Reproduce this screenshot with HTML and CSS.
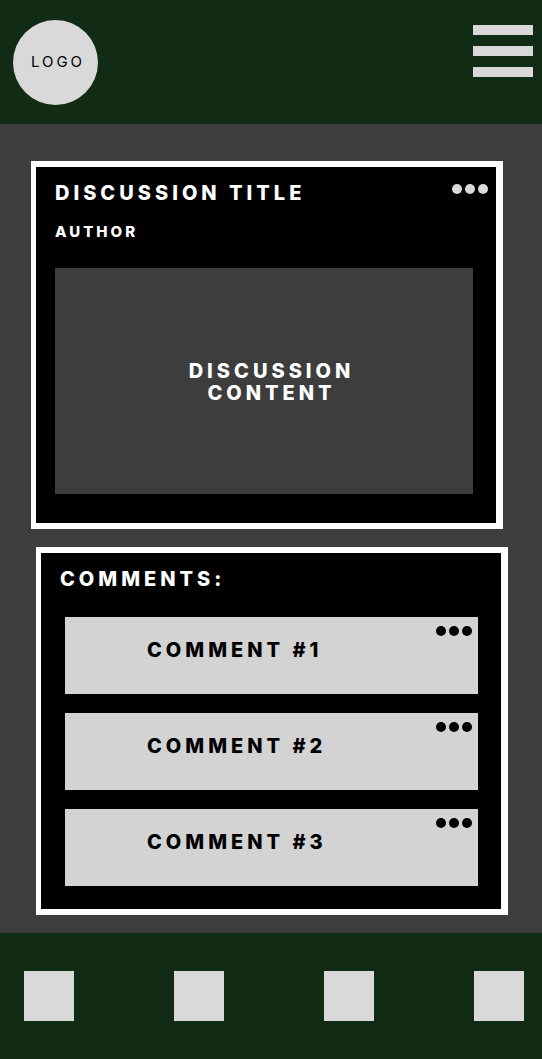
FILE: index.html
```html
<!DOCTYPE html>
<html lang="en">
<head>
<meta charset="utf-8">
<meta name="viewport" content="width=device-width, initial-scale=1">
<title>Discussion</title>
<link rel="stylesheet" href="styles.css">
</head>
<body>
<header class="topbar">
  <a class="logo" href="#">LOGO</a>
  <button class="menu" type="button" aria-label="Menu"><span class="bar"></span><span class="bar"></span><span class="bar"></span></button>
</header>
<main class="page">
  <article class="card discussion">
    <div class="card-head">
      <h1 class="heading">DISCUSSION TITLE</h1>
      <button class="more more-light" type="button" aria-label="Discussion options"><span class="dot"></span><span class="dot"></span><span class="dot"></span></button>
    </div>
    <p class="author">AUTHOR</p>
    <div class="content"><p class="content-text">DISCUSSION<br>CONTENT</p></div>
  </article>
  <section class="card comments">
    <h2 class="heading">COMMENTS:</h2>
    <ul class="comment-list">
      <li class="comment">
        <p class="comment-text">COMMENT #1</p>
        <button class="more" type="button" aria-label="Comment 1 options"><span class="dot"></span><span class="dot"></span><span class="dot"></span></button>
      </li>
      <li class="comment">
        <p class="comment-text">COMMENT #2</p>
        <button class="more" type="button" aria-label="Comment 2 options"><span class="dot"></span><span class="dot"></span><span class="dot"></span></button>
      </li>
      <li class="comment">
        <p class="comment-text">COMMENT #3</p>
        <button class="more" type="button" aria-label="Comment 3 options"><span class="dot"></span><span class="dot"></span><span class="dot"></span></button>
      </li>
    </ul>
  </section>
</main>
<nav class="tabs" aria-label="Main">
  <a class="tab" href="#" aria-label="Tab 1"></a>
  <a class="tab" href="#" aria-label="Tab 2"></a>
  <a class="tab" href="#" aria-label="Tab 3"></a>
  <a class="tab" href="#" aria-label="Tab 4"></a>
</nav>
</body>
</html>
```

FILE: styles.css
```css
* { box-sizing: border-box; }

body {
  margin: 0;
  min-height: 100vh;
  display: flex;
  flex-direction: column;
  background: #3d3d3d;
  color: #fff;
  font-family: Inter, "Liberation Sans", sans-serif;
  font-size: 20px;
  font-weight: 800;
  line-height: 24px;
  letter-spacing: 4px;
}

h1, h2, p, ul { margin: 0; padding: 0; }

button { border: 0; padding: 0; background: none; cursor: pointer; }

.topbar {
  display: flex;
  justify-content: space-between;
  align-items: flex-start;
  padding: 20px 9px 19px 13px;
  background: #122b14;
}

.logo {
  display: flex;
  align-items: center;
  justify-content: center;
  width: 85px;
  height: 85px;
  padding: 0 0 2px 5px;
  border-radius: 50%;
  background: #d9d9d9;
  color: #000;
  font-size: 15px;
  font-weight: 400;
  letter-spacing: 3px;
  text-decoration: none;
}

.menu {
  display: grid;
  gap: 11px;
  width: 60px;
  margin-top: 5px;
}

.bar { height: 10px; background: #d9d9d9; }

.page {
  flex: 1;
  display: flex;
  flex-direction: column;
  gap: 18px;
  padding: 37px 34px 18px 31px;
}

.card {
  border: 6px solid #fff;
  border-left-width: 5px;
  border-right-width: 7px;
  background: #000;
}

.discussion {
  margin-right: 5px;
  padding: 14px 8px 29px 19px;
}

.comments {
  margin-left: 5px;
  padding: 14px 23px 23px 19px;
}

.heading { font-size: 20px; font-weight: 800; line-height: 24px; }

.card-head {
  display: flex;
  justify-content: space-between;
  align-items: flex-start;
}

.more {
  display: flex;
  flex: none;
  gap: 3px;
  color: #000;
}

.more-light { margin-top: 3px; color: #d9d9d9; }

.dot {
  width: 10px;
  height: 10px;
  border-radius: 50%;
  background: currentColor;
}

.author {
  margin-top: 15px;
  font-size: 15px;
  letter-spacing: 3px;
}

.content {
  display: flex;
  align-items: center;
  justify-content: center;
  min-height: 226px;
  margin: 24px 15px 0 0;
  padding: 2px 0 0 15px;
  background: #3d3d3d;
}

.content-text { line-height: 22px; text-align: center; }

.comment-list {
  display: grid;
  gap: 19px;
  margin: 26px 0 0 5px;
  list-style: none;
}

.comment {
  display: flex;
  justify-content: space-between;
  align-items: flex-start;
  min-height: 77px;
  padding: 9px 6px 0 82px;
  background: #d3d3d3;
  color: #000;
}

.comment-text { margin-top: 12px; }

.tabs {
  display: flex;
  justify-content: space-between;
  padding: 38px 18px 38px 24px;
  background: #122b14;
}

.tab { width: 50px; height: 50px; background: #d9d9d9; }
```
